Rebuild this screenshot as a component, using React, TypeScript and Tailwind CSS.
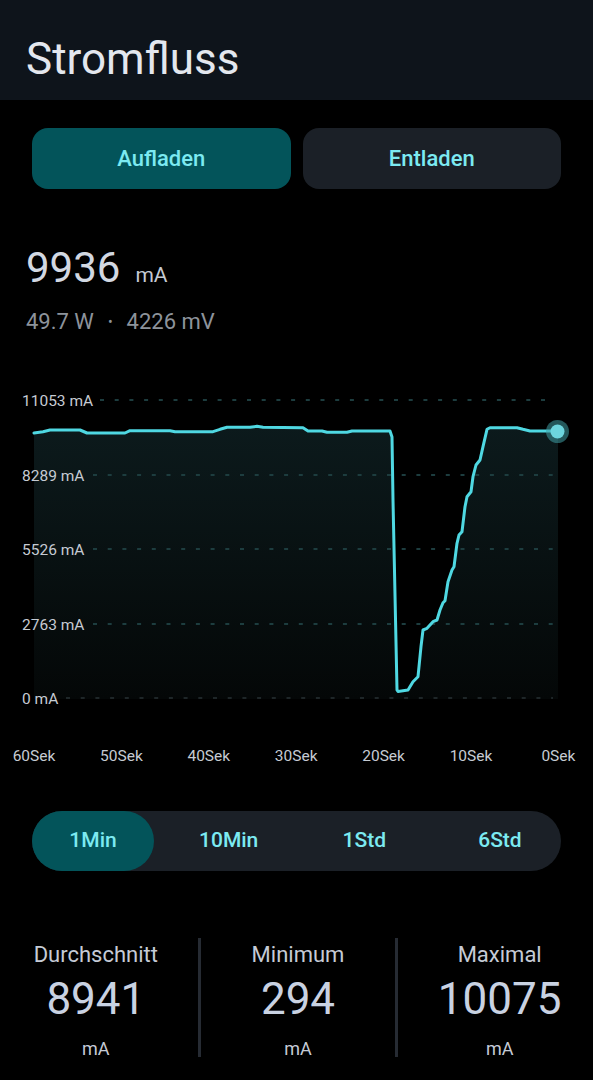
import { useState } from 'react'

// --- Chart data (page coordinates, viewBox starts at y=380) ---
const linePoints: [number, number][] = [
  [34, 433], [43, 431.7], [50, 430], [80, 430], [87, 433], [125, 433], [130, 430.7],
  [170, 430.7], [175, 431.7], [213, 431.7], [220, 429.3], [227, 427.3], [250, 427.3],
  [257, 426.3], [263, 427.3], [303, 427.7], [308, 431], [322, 431], [327, 432.3],
  [347, 432.3], [352, 431], [390, 431], [392, 437], [393, 500], [397, 690],
  [398, 691.5], [408, 690], [413, 681.7], [418, 676.7], [421, 646.7], [423, 630],
  [427, 628.3], [433, 621.7], [437, 620], [440, 610], [443, 602.7], [445, 600.7],
  [448, 581.7], [452, 570], [454, 566.7], [457, 543.3], [459, 535], [462, 531.7],
  [465, 506.7], [467, 496.7], [471, 491.7], [473, 476.7], [476, 465], [480, 460],
  [483, 446.7], [487, 429.3], [490, 427.7], [517, 427.7], [523, 429.3], [530, 431],
  [558, 431],
]

const yTicks = [
  { label: '11053 mA', y: 400, start: 100 },
  { label: '8289 mA', y: 475, start: 93 },
  { label: '5526 mA', y: 549, start: 93 },
  { label: '2763 mA', y: 624, start: 93 },
  { label: '0 mA', y: 698, start: 66 },
]

const xTicks = ['60Sek', '50Sek', '40Sek', '30Sek', '20Sek', '10Sek', '0Sek']

const ranges = ['1Min', '10Min', '1Std', '6Std']

const stats = [
  { label: 'Durchschnitt', value: '8941', pad: 'pr-[6px]' },
  { label: 'Minimum', value: '294', pad: '' },
  { label: 'Maximal', value: '10075', pad: 'pl-[8px]' },
]

function FlowChart() {
  const line = linePoints.map(([x, y], i) => `${i ? 'L' : 'M'}${x} ${y}`).join(' ')
  const area = `${line} L558 699 L34 699 Z`

  return (
    <svg viewBox="0 380 593 400" className="mt-[47px] block h-[400px] w-full">
      <defs>
        <linearGradient id="flowFill" x1="0" y1="0" x2="0" y2="1">
          <stop offset="0%" stopColor="#0c1a1c" />
          <stop offset="100%" stopColor="#040707" />
        </linearGradient>
      </defs>
      <path d={area} fill="url(#flowFill)" />
      {yTicks.map((t, i) => (
        <g key={t.label}>
          <line
            x1={t.start}
            x2={553}
            y1={t.y}
            y2={t.y}
            stroke={i === yTicks.length - 1 ? '#1e2628' : '#1d3d3f'}
            strokeWidth={2}
            strokeDasharray="4 10.7"
          />
          <text
            x={22}
            y={t.y + 5.5}
            fontSize={15.5}
            fill="#c6cbd3"
            fontFamily="Roboto, sans-serif"
          >
            {t.label}
          </text>
        </g>
      ))}
      <path
        d={line}
        fill="none"
        stroke="#4fd8e2"
        strokeWidth={3}
        strokeLinejoin="round"
        strokeLinecap="round"
      />
      <circle cx={557.5} cy={431.5} r={11.5} fill="#3f9ea4" fillOpacity={0.55} />
      <circle cx={557.5} cy={431.5} r={7} fill="#6dd6de" />
      {xTicks.map((t, i) => (
        <text
          key={t}
          x={34 + i * 87.4}
          y={761}
          fontSize={15.5}
          fill="#c6cbd3"
          textAnchor="middle"
          fontFamily="Roboto, sans-serif"
        >
          {t}
        </text>
      ))}
    </svg>
  )
}

export default function App() {
  const [mode, setMode] = useState<'charge' | 'discharge'>('charge')
  const [range, setRange] = useState<string>('1Min')

  return (
    <div className="min-h-screen w-full bg-black font-['Roboto',sans-serif]">
      {/* --- Header --- */}
      <header className="h-[100px] bg-[#0e141b] px-[26px] pt-[37px]">
        <h1 className="text-[44px] leading-none text-[#e3e7ee]">Stromfluss</h1>
      </header>

      {/* --- Mode toggle --- */}
      <div className="mt-[28px] flex gap-3 px-8">
        <button
          onClick={() => setMode('charge')}
          className={`h-[61px] flex-1 rounded-2xl text-[22px] font-medium text-[#7ceaf1] ${
            mode === 'charge' ? 'bg-[#03545a]' : 'bg-[#1b2027]'
          }`}
        >
          Aufladen
        </button>
        <button
          onClick={() => setMode('discharge')}
          className={`h-[61px] flex-1 rounded-2xl text-[22px] font-medium text-[#7ceaf1] ${
            mode === 'discharge' ? 'bg-[#03545a]' : 'bg-[#1b2027]'
          }`}
        >
          Entladen
        </button>
      </div>

      {/* --- Current reading --- */}
      <div className="mt-[58px] flex items-baseline gap-[15px] px-[26px]">
        <span className="text-[42px] leading-none text-[#d2d8e2]">9936</span>
        <span className="text-[21px] leading-none text-[#c4cad3]">mA</span>
      </div>
      <div className="mt-[22px] flex items-center gap-[14px] px-[26px] text-[22px] leading-none text-[#8d939b]">
        <span>49.7 W</span>
        <span className="text-[14px]">•</span>
        <span>4226 mV</span>
      </div>

      {/* --- Chart --- */}
      <FlowChart />

      {/* --- Range selector --- */}
      <div className="mx-8 mt-[31px] flex h-[60px] justify-between rounded-full bg-[#1b2027]">
        {ranges.map((r) => (
          <button
            key={r}
            onClick={() => setRange(r)}
            className={`h-full w-[122px] rounded-full text-[21px] font-medium text-[#7ceaf1] ${
              range === r ? 'bg-[#03545a]' : ''
            }`}
          >
            {r}
          </button>
        ))}
      </div>

      {/* --- Stats --- */}
      <div className="mt-[67px] flex h-[119px]">
        {stats.map((s, i) => (
          <div key={s.label} className="flex flex-1 items-stretch">
            {i > 0 && <div className="w-[3px] bg-[#262b33]" />}
            <div className={`flex flex-1 flex-col items-center pt-[6px] ${s.pad}`}>
              <span className="text-[22px] leading-none text-[#c5cbd6]">{s.label}</span>
              <span className="mt-[11px] text-[44px] leading-none text-[#c9d2e2]">
                {s.value}
              </span>
              <span className="mt-[19px] text-[18px] leading-none text-[#c5cbd6]">mA</span>
            </div>
          </div>
        ))}
      </div>
    </div>
  )
}
